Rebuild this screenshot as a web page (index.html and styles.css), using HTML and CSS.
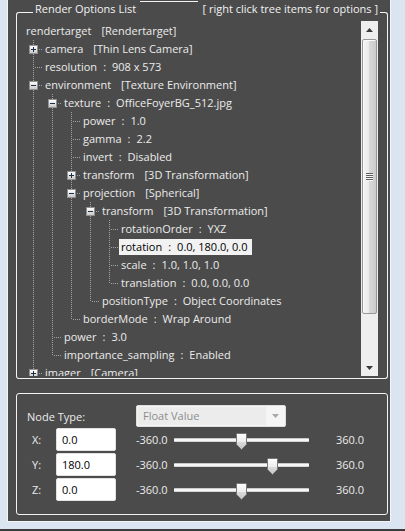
FILE: index.html
```html
<!DOCTYPE html>
<html>
<head>
<meta charset="utf-8">
<link rel="stylesheet" href="styles.css">
</head>
<body>
<div class="frame">
  <div class="group g1">
    <div class="ghead">
      <span class="gl gl-left"></span>
      <span class="gtitle">Render Options List</span>
      <span class="gl gl-mid"></span>
      <span class="gtitle">[ right click tree items for options ]</span>
      <span class="gl gl-right"></span>
    </div>
    <div class="gbody">
      <div class="tree">
        <div class="rows">
          <div class="row"><span class="lbl">rendertarget<span class="ty">[Rendertarget]</span></span></div>
          <div class="row"><i class="c t"><b class="box plus"></b></i><span class="lbl">camera<span class="ty">[Thin Lens Camera]</span></span></div>
          <div class="row"><i class="c t"></i><span class="lbl">resolution<span class="s">:</span>908 x 573</span></div>
          <div class="row"><i class="c t"><b class="box minus"></b></i><span class="lbl">environment<span class="ty">[Texture Environment]</span></span></div>
          <div class="row"><i class="c v"></i><i class="c t"><b class="box minus"></b></i><span class="lbl">texture<span class="s">:</span>OfficeFoyerBG_512.jpg</span></div>
          <div class="row"><i class="c v"></i><i class="c v"></i><i class="c t"></i><span class="lbl">power<span class="s">:</span>1.0</span></div>
          <div class="row"><i class="c v"></i><i class="c v"></i><i class="c t"></i><span class="lbl">gamma<span class="s">:</span>2.2</span></div>
          <div class="row"><i class="c v"></i><i class="c v"></i><i class="c t"></i><span class="lbl">invert<span class="s">:</span>Disabled</span></div>
          <div class="row"><i class="c v"></i><i class="c v"></i><i class="c t"><b class="box plus"></b></i><span class="lbl">transform<span class="ty">[3D Transformation]</span></span></div>
          <div class="row"><i class="c v"></i><i class="c v"></i><i class="c t"><b class="box minus"></b></i><span class="lbl">projection<span class="ty">[Spherical]</span></span></div>
          <div class="row"><i class="c v"></i><i class="c v"></i><i class="c v"></i><i class="c t"><b class="box minus"></b></i><span class="lbl">transform<span class="ty">[3D Transformation]</span></span></div>
          <div class="row"><i class="c v"></i><i class="c v"></i><i class="c v"></i><i class="c v"></i><i class="c t"></i><span class="lbl">rotationOrder<span class="s">:</span>YXZ</span></div>
          <div class="row"><i class="c v"></i><i class="c v"></i><i class="c v"></i><i class="c v"></i><i class="c t"></i><span class="lbl sel">rotation<span class="s">:</span>0.0, 180.0, 0.0</span></div>
          <div class="row"><i class="c v"></i><i class="c v"></i><i class="c v"></i><i class="c v"></i><i class="c t"></i><span class="lbl">scale<span class="s">:</span>1.0, 1.0, 1.0</span></div>
          <div class="row"><i class="c v"></i><i class="c v"></i><i class="c v"></i><i class="c v"></i><i class="c l"></i><span class="lbl">translation<span class="s">:</span>0.0, 0.0, 0.0</span></div>
          <div class="row"><i class="c v"></i><i class="c v"></i><i class="c v"></i><i class="c l"></i><span class="lbl">positionType<span class="s">:</span>Object Coordinates</span></div>
          <div class="row"><i class="c v"></i><i class="c v"></i><i class="c l"></i><span class="lbl">borderMode<span class="s">:</span>Wrap Around</span></div>
          <div class="row"><i class="c v"></i><i class="c t"></i><span class="lbl">power<span class="s">:</span>3.0</span></div>
          <div class="row"><i class="c v"></i><i class="c l"></i><span class="lbl">importance_sampling<span class="s">:</span>Enabled</span></div>
          <div class="row"><i class="c l"><b class="box plus"></b></i><span class="lbl">imager<span class="ty">[Camera]</span></span></div>
        </div>
        <div class="vscroll">
          <div class="sb-btn"><svg width="7" height="4" viewBox="0 0 7 4"><path d="M3.5 0 L7 4 H0 Z" fill="#3a3a3a"/></svg></div>
          <div class="sb-track"><div class="sb-thumb"><span class="grip"></span></div></div>
          <div class="sb-btn"><svg width="7" height="4" viewBox="0 0 7 4"><path d="M0 0 H7 L3.5 4 Z" fill="#3a3a3a"/></svg></div>
        </div>
      </div>
    </div>
  </div>

  <div class="group g2">
    <div class="nt-row">
      <span class="nt-label">Node Type:</span>
      <div class="combo"><span class="combo-text">Float Value</span><span class="combo-arrow"><svg width="7" height="4" viewBox="0 0 7 4"><path d="M0 0 H7 L3.5 4 Z" fill="#a8a8a8"/></svg></span></div>
    </div>
    <div class="ax-row">
      <span class="ax-label">X:</span>
      <div class="field">0.0</div>
      <span class="mn">-360.0</span>
      <div class="slider"><div class="track"></div><svg class="thumb" style="left:62px" width="11" height="17" viewBox="0 0 11 17"><defs><linearGradient id="tg" x1="0" y1="0" x2="0" y2="1"><stop offset="0" stop-color="#fdfdfd"/><stop offset=".5" stop-color="#eeeeee"/><stop offset=".56" stop-color="#d9d9d9"/><stop offset="1" stop-color="#c6c6c6"/></linearGradient></defs><path d="M1.5 .5 H9.5 A1 1 0 0 1 10.5 1.5 V11.5 L5.5 16.5 L.5 11.5 V1.5 A1 1 0 0 1 1.5 .5 Z" fill="url(#tg)" stroke="#777"/></svg></div>
      <span class="mx">360.0</span>
    </div>
    <div class="ax-row">
      <span class="ax-label">Y:</span>
      <div class="field">180.0</div>
      <span class="mn">-360.0</span>
      <div class="slider"><div class="track"></div><svg class="thumb" style="left:93px" width="11" height="17" viewBox="0 0 11 17"><path d="M1.5 .5 H9.5 A1 1 0 0 1 10.5 1.5 V11.5 L5.5 16.5 L.5 11.5 V1.5 A1 1 0 0 1 1.5 .5 Z" fill="url(#tg)" stroke="#777"/></svg></div>
      <span class="mx">360.0</span>
    </div>
    <div class="ax-row">
      <span class="ax-label">Z:</span>
      <div class="field">0.0</div>
      <span class="mn">-360.0</span>
      <div class="slider"><div class="track"></div><svg class="thumb" style="left:62px" width="11" height="17" viewBox="0 0 11 17"><path d="M1.5 .5 H9.5 A1 1 0 0 1 10.5 1.5 V11.5 L5.5 16.5 L.5 11.5 V1.5 A1 1 0 0 1 1.5 .5 Z" fill="url(#tg)" stroke="#777"/></svg></div>
      <span class="mx">360.0</span>
    </div>
  </div>
</div>
<div class="strip"></div>
</body>
</html>
```

FILE: styles.css
```css
* { box-sizing: border-box; }
html, body { margin: 0; padding: 0; }
body {
  background: #dbe5f1;
  width: 405px;
  height: 531px;
  overflow: hidden;
  font-family: "Open Sans", "Segoe UI", sans-serif;
  font-size: 11px;
  color: #ebebeb;
}
.frame {
  margin-left: 7px;
  width: 384px;
  height: 522px;
  background: #4b4b4b;
  border: 1px solid #f4f4f4;
  border-top: none;
  padding: 1px 2px 6px 8px;
}
.group { width: 372px; }

/* group box 1 header */
.ghead { display: flex; height: 16px; }
.gl { border-top: 1px solid #f2f2f2; margin-top: 11px; }
.gl-left { width: 17px; border-left: 1px solid #f2f2f2; border-top-left-radius: 3px; }
.gl-right { width: 8px; border-right: 1px solid #f2f2f2; border-top-right-radius: 3px; }
.gl-mid { flex: 1; margin: 0 2px; }
.gtitle { line-height: 16px; padding: 0 2px; color: #f2f2f2; white-space: nowrap; }
.gtitle:first-of-type { padding-left: 1px; }

.gbody {
  border: 1px solid #f2f2f2;
  border-top: none;
  border-radius: 0 0 3px 3px;
  padding: 4px 9px 2px 3px;
}
.tree { display: flex; height: 355px; }
.rows { flex: 1; overflow: hidden; padding: 1px 0 0 6px; }
.row { display: flex; align-items: center; height: 18px; white-space: nowrap; }
.c {
  flex: none;
  width: 19px;
  height: 18px;
  display: flex;
  align-items: flex-start;
}
.c.v {
  background: repeating-linear-gradient(to bottom, #a3a3a3 0 1px, transparent 1px 2px) 7px 0 / 1px 18px no-repeat;
}
.c.t {
  background:
    repeating-linear-gradient(to right, #a3a3a3 0 1px, transparent 1px 2px) 9px 9px / 8px 1px no-repeat,
    repeating-linear-gradient(to bottom, #a3a3a3 0 1px, transparent 1px 2px) 7px 0 / 1px 18px no-repeat;
}
.c.l {
  background:
    repeating-linear-gradient(to right, #a3a3a3 0 1px, transparent 1px 2px) 9px 9px / 8px 1px no-repeat,
    repeating-linear-gradient(to bottom, #a3a3a3 0 1px, transparent 1px 2px) 7px 0 / 1px 10px no-repeat;
}
.box {
  width: 9px;
  height: 9px;
  margin: 5px 0 0 3px;
  border: 1px solid #919191;
}
.box.plus {
  background:
    linear-gradient(#1c2f4a, #1c2f4a) 1px 3px / 5px 1px no-repeat,
    linear-gradient(#1c2f4a, #1c2f4a) 3px 1px / 1px 5px no-repeat,
    linear-gradient(#ffffff, #c9c9c9);
}
.box.minus {
  background:
    linear-gradient(#1c2f4a, #1c2f4a) 1px 3px / 5px 1px no-repeat,
    linear-gradient(#ffffff, #c9c9c9);
}
.lbl { line-height: 16px; padding: 0 4px 0 2px; margin-left: -2px; }
.lbl.sel { background: #f2f2f2; color: #000; }
.ty { margin-left: 10px; }
.s { margin: 0 6px 0 6px; }

/* scrollbar */
.vscroll {
  flex: none;
  width: 17px;
  display: flex;
  flex-direction: column;
  background: #eeeeee;
}
.sb-btn { flex: none; height: 17px; display: flex; align-items: center; justify-content: center; }
.sb-btn svg { display: block; }
.sb-track { flex: 1; padding: 1px 1px 0 1px; }
.sb-thumb {
  height: 275px;
  border: 1px solid #979797;
  border-radius: 2px;
  background: linear-gradient(to right, #f4f4f4 0%, #ececec 42%, #dadada 46%, #cbcbcb 100%);
  box-shadow: inset 1px 1px 0 #fbfbfb;
  display: flex;
  align-items: center;
  justify-content: center;
}
.grip {
  width: 7px;
  height: 8px;
  background: repeating-linear-gradient(to bottom, #5f5f5f 0 1px, #f6f6f6 1px 2px);
}

/* group box 2 */
.g2 {
  margin-top: 14px;
  height: 122px;
  border: 1px solid #f2f2f2;
  border-radius: 3px;
  padding: 11px 0 0 10px;
}
.nt-row { display: flex; align-items: center; height: 22px; }
.nt-label { width: 109px; }
.combo {
  width: 150px;
  height: 22px;
  border: 1px solid #dedede;
  border-radius: 2px;
  background: #f5f5f5;
  padding: 1px;
  display: flex;
}
.combo-text {
  width: 128px;
  background: #ececec;
  color: #8c8c8c;
  padding-left: 5px;
  line-height: 18px;
}
.combo-arrow { flex: 1; display: flex; align-items: center; justify-content: center; }
.combo-arrow svg { display: block; }
.ax-row { display: flex; align-items: center; height: 23px; margin-top: 2px; }
.nt-row + .ax-row { margin-top: 1px; }
.ax-label { width: 29px; padding-left: 5px; }
.field {
  width: 60px;
  height: 23px;
  background: #fff;
  border: 1px solid #e2e2e2;
  border-radius: 2px;
  color: #000;
  padding-left: 5px;
  line-height: 21px;
}
.mn { margin-left: 20px; width: 38px; }
.slider { position: relative; width: 135px; height: 23px; padding-top: 10px; }
.track {
  height: 4px;
  border-top: 1px solid #c9c9c9;
  border-bottom: 1px solid #d6d6d6;
  background: #f7f7f7;
  border-radius: 1px;
}
.thumb { position: absolute; top: 5px; display: block; }
.mx { margin-left: 27px; }

.strip { margin-top: 7px; height: 2px; background: #3b3b3b; }
```
